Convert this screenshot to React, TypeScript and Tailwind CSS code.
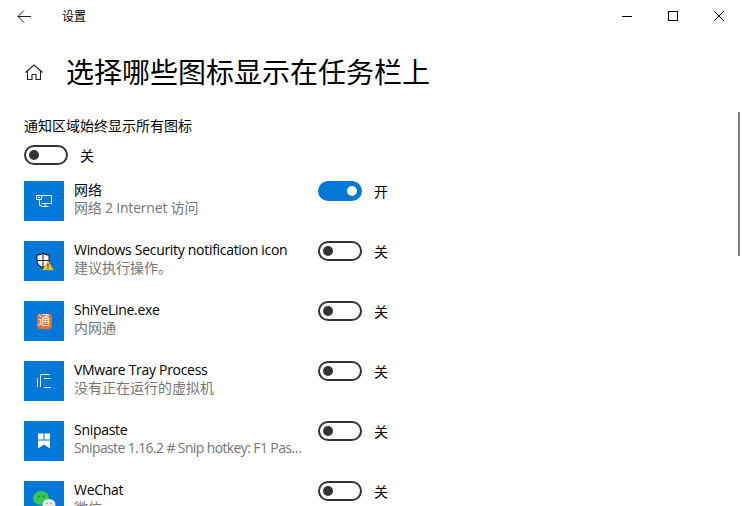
import React from "react";

const FONT = "font-['Open_Sans','Noto_Sans_CJK_SC',sans-serif]";

function Toggle({ on = false }: { on?: boolean }) {
  return (
    <div className="flex items-start">
      <div
        className={
          on
            ? "flex h-5 w-11 items-center justify-end rounded-full bg-[#0078d7] pr-[5px]"
            : "flex h-5 w-11 items-center rounded-full border-2 border-[#333333] pl-[3px]"
        }
      >
        <div className={on ? "h-2.5 w-2.5 rounded-full bg-white" : "h-2.5 w-2.5 rounded-full bg-[#333333]"} />
      </div>
      <span className="ml-3 pt-px text-sm leading-5 text-black">{on ? "开" : "关"}</span>
    </div>
  );
}

const NetIcon = (
  <svg width="16" height="16" viewBox="0 0 16 16" fill="none" stroke="white" strokeWidth="1">
    <path d="M3.5 2.5H15.5V10.5H5.5M3.5 6.5V12.5M3.5 12.5H5.5M5.5 13.5H12.5M9 10.5V13.5" />
    <rect x="0.5" y="2.5" width="5" height="4" fill="#0078d7" />
    <path d="M2 4.5H4" />
  </svg>
);

const ShieldIcon = (
  <svg width="20" height="20" viewBox="0 0 20 20">
    <path d="M9 1.5C7 3 4.5 3.6 2.5 3.6V9.5C2.5 13 5 15.5 9 17.5C13 15.5 15.5 13 15.5 9.5V3.6C13.5 3.6 11 3 9 1.5Z" fill="#1c1c1c" />
    <path d="M8.5 2.9V9H3.5V4.6C5.4 4.5 7.1 3.9 8.5 2.9ZM9.5 2.9C10.9 3.9 12.6 4.5 14.5 4.6V9H9.5ZM3.5 10H8.5V16C5.5 14.5 3.5 12.6 3.5 10ZM9.5 10H14.5C14.5 12.6 12.5 14.5 9.5 16Z" fill="white" />
    <path d="M14 9.5L19.5 19H8.5Z" fill="#f5c518" />
    <path d="M14 12.5V16M14 17V18" stroke="#222" strokeWidth="1" />
  </svg>
);

const VmIcon = (
  <svg width="16" height="16" viewBox="0 0 16 16" fill="none" stroke="white" strokeWidth="1">
    <path d="M1.5 5V14M4.5 2V14M4.5 1.5H14M8 5.5H14.5M8 14.5H15" />
  </svg>
);

const SnipIcon = (
  <svg width="16" height="16" viewBox="0 0 16 16" fill="white">
    <path d="M2 0.5H7.5V6.5H2ZM8.5 0.5H14V6.5H8.5ZM2 7.5H14V15.5L8 11.5L2 15.5Z" />
  </svg>
);

const WeChatIcon = (
  <svg width="24" height="24" viewBox="0 0 24 24">
    <ellipse cx="9" cy="9" rx="8" ry="7" fill="#3cc651" />
    <circle cx="6.5" cy="7.5" r="1" fill="#1d8a30" />
    <circle cx="11.5" cy="7.5" r="1" fill="#1d8a30" />
    <ellipse cx="17" cy="15.5" rx="6.5" ry="5.5" fill="#e8e8e8" />
    <circle cx="15" cy="14.5" r="0.8" fill="#999" />
    <circle cx="19" cy="14.5" r="0.8" fill="#999" />
  </svg>
);

const TongIcon = (
  <div className="flex h-[15px] w-[15px] items-center justify-center rounded-[3px] bg-[#ee6f1f] text-[12px] leading-none text-white">
    通
  </div>
);

const rows = [
  { icon: NetIcon, title: "网络", sub: "网络 2 Internet 访问", on: true, subCls: "tracking-[-0.2px]" },
  { icon: ShieldIcon, title: "Windows Security notification icon", titleCls: "tracking-[-0.3px]", sub: "建议执行操作。" },
  { icon: TongIcon, title: "ShiYeLine.exe", titleCls: "tracking-[-0.3px]", sub: "内网通" },
  { icon: VmIcon, title: "VMware Tray Process", titleCls: "tracking-[-0.3px]", sub: "没有正在运行的虚拟机" },
  { icon: SnipIcon, title: "Snipaste", titleCls: "tracking-[-0.3px]", sub: "Snipaste 1.16.2 # Snip hotkey: F1 Paste hotkey: F3", subCls: "tracking-[-0.62px]" },
  { icon: WeChatIcon, title: "WeChat", titleCls: "tracking-[-0.3px]", sub: "微信" },
];

export default function App() {
  return (
    <div className={`${FONT} relative h-[506px] w-[742px] overflow-hidden bg-white text-black`}>
      {/* title bar */}
      <div className="flex h-8 items-center">
        <div className="ml-[17px] flex w-[45px] items-center">
          <svg width="15" height="13" viewBox="0 0 15 13" fill="none" stroke="#222" strokeWidth="1">
            <path d="M14 6.5H1M7 0.5L1 6.5L7 12.5" />
          </svg>
        </div>
        <span className="pt-px text-xs">设置</span>
        <div className="ml-auto flex items-center">
          <div className="flex w-[46px] justify-center">
            <div className="h-px w-2.5 bg-black" />
          </div>
          <div className="flex w-[46px] justify-center">
            <div className="h-2.5 w-2.5 border border-black" />
          </div>
          <div className="flex w-[46px] justify-center">
            <svg width="10" height="10" viewBox="0 0 10 10" stroke="black" strokeWidth="1">
              <path d="M0 0L10 10M10 0L0 10" />
            </svg>
          </div>
        </div>
      </div>

      {/* heading */}
      <div className="mt-5 flex h-10 items-center pl-6">
        <svg className="w-[42px] shrink-0" width="20" height="16" viewBox="0 0 42 16" fill="none" stroke="#222" strokeWidth="1.1" preserveAspectRatio="xMinYMid meet">
          <path d="M1.5 8.5L10 1L18.5 8.5M3.5 7V15.5H8V10.5H12V15.5H16.5V7" />
        </svg>
        <h1 className="text-[28px] leading-10 font-normal">选择哪些图标显示在任务栏上</h1>
      </div>

      {/* master switch */}
      <div className="mt-6 pl-6 text-sm leading-5">通知区域始终显示所有图标</div>
      <div className="mt-[9px] pl-6">
        <Toggle />
      </div>

      {/* rows */}
      <div className="mt-[15px] flex flex-col gap-5 pl-6">
        {rows.map((r) => (
          <div key={r.title} className="flex h-10 items-start">
            <div className="flex h-10 w-10 shrink-0 items-center justify-center bg-[#0078d7]">{r.icon}</div>
            <div className="ml-2.5 w-[232px] text-sm leading-[18px]">
              <div className={`truncate ${r.titleCls ?? ""}`}>{r.title}</div>
              <div className={`truncate text-[#767676] ${r.subCls ?? ""}`}>{r.sub}</div>
            </div>
            <div className="ml-3">
              <Toggle on={r.on} />
            </div>
          </div>
        ))}
      </div>

      {/* scrollbar thumb */}
      <div className="absolute top-[112px] right-[2px] h-[144px] w-0.5 bg-[#7f7f7f]" />
    </div>
  );
}
